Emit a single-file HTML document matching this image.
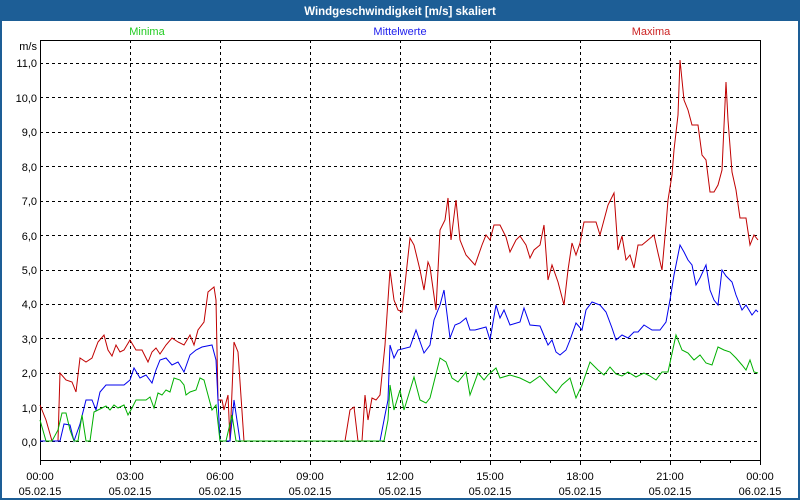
<!DOCTYPE html>
<html><head><meta charset="utf-8"><style>
body{margin:0;width:800px;height:500px;overflow:hidden;background:#fff;font-family:"Liberation Sans",sans-serif}
</style></head><body>
<svg width="800" height="500" xmlns="http://www.w3.org/2000/svg" style="display:block">
<rect x="0" y="0" width="800" height="500" fill="#1d5e96"/>
<rect x="2" y="21" width="796" height="477" fill="#fff"/>
<text x="400" y="15" fill="#fff" font-size="11.5" font-weight="bold" text-anchor="middle" font-family="Liberation Sans">Windgeschwindigkeit [m/s] skaliert</text>
<g font-size="11" font-family="Liberation Sans">
<text x="147" y="35" fill="#22cc22" text-anchor="middle">Minima</text>
<text x="400" y="35" fill="#2020ee" text-anchor="middle">Mittelwerte</text>
<text x="651" y="35" fill="#cc2222" text-anchor="middle">Maxima</text>
</g>
<g stroke="#000" stroke-width="1" stroke-dasharray="3,3" fill="none">
<path d="M40 63.5H760M40 97.5H760M40 132.5H760M40 166.5H760M40 201.5H760M40 235.5H760M40 270.5H760M40 304.5H760M40 338.5H760M40 373.5H760M40 407.5H760M40 441.5H760"/>
<path d="M130.5 40V460M220.5 40V460M310.5 40V460M400.5 40V460M490.5 40V460M580.5 40V460M670.5 40V460"/>
</g>
<path d="M40.5 40.5H760.5V460.5H40.5Z" fill="none" stroke="#000"/>
<g stroke="#000"><path d="M40.5 460V465M70.5 460V463M100.5 460V463M130.5 460V465M160.5 460V463M190.5 460V463M220.5 460V465M250.5 460V463M280.5 460V463M310.5 460V465M340.5 460V463M370.5 460V463M400.5 460V465M430.5 460V463M460.5 460V463M490.5 460V465M520.5 460V463M550.5 460V463M580.5 460V465M610.5 460V463M640.5 460V463M670.5 460V465M700.5 460V463M730.5 460V463M760.5 460V465"/></g>
<g font-size="11" font-family="Liberation Sans" fill="#000" text-anchor="end">
<text x="37" y="50">m/s</text>
<text x="37" y="67">11,0</text><text x="37" y="102">10,0</text><text x="37" y="136">9,0</text><text x="37" y="171">8,0</text><text x="37" y="205">7,0</text><text x="37" y="240">6,0</text><text x="37" y="274">5,0</text><text x="37" y="308">4,0</text><text x="37" y="343">3,0</text><text x="37" y="377">2,0</text><text x="37" y="412">1,0</text><text x="37" y="446">0,0</text>
</g>
<g font-size="11" font-family="Liberation Sans" fill="#000" text-anchor="middle">
<text x="40" y="480">00:00</text><text x="40" y="495">05.02.15</text>
<text x="130" y="480">03:00</text><text x="130" y="495">05.02.15</text>
<text x="220" y="480">06:00</text><text x="220" y="495">05.02.15</text>
<text x="310" y="480">09:00</text><text x="310" y="495">05.02.15</text>
<text x="400" y="480">12:00</text><text x="400" y="495">05.02.15</text>
<text x="490" y="480">15:00</text><text x="490" y="495">05.02.15</text>
<text x="580" y="480">18:00</text><text x="580" y="495">05.02.15</text>
<text x="670" y="480">21:00</text><text x="670" y="495">05.02.15</text>
<text x="760" y="480">00:00</text><text x="760" y="495">06.02.15</text>
</g>
<g fill="none" stroke-width="1">
<polyline stroke="#c00000" points="40,405 46,420 52,441 58,441 60,373 66,380 72,382 76,392 80,358 86,362 92,358 98,342 104,335 108,350 112,356 116,345 120,352 124,350 130,340 136,350 142,350 148,362 152,352 156,348 160,354 166,345 172,338 178,342 184,345 190,335 194,345 198,330 204,322 208,292 214,287 216,300 218,400 222,400 224,410 228,395 230,441 234,342 238,352 244,441 250,441 345,441 350,410 354,407 358,441 362,441 365,395 368,420 372,398 376,400 380,395 385,345 390,270 394,300 398,310 402,312 410,238 414,245 420,270 424,290 428,262 430,267 436,310 440,230 445,220 448,198 451,240 456,200 460,240 466,255 475,265 482,245 486,235 490,240 494,225 500,225 506,237 510,252 516,240 520,236 526,245 530,258 534,250 540,245 544,225 548,280 552,265 558,282 564,305 568,270 572,243 576,255 580,243 584,222 590,222 596,222 600,235 608,205 614,193 618,250 622,236 626,260 630,255 634,268 638,245 642,245 648,240 654,235 658,253 662,270 666,225 668,200 672,175 674,150 678,115 680,60 684,100 688,110 692,125 698,125 702,155 706,160 710,192 714,192 718,185 722,170 726,82 728,120 732,172 736,190 740,218 746,218 750,245 754,235 758,240"/>
<polyline stroke="#0000ee" points="40,441 60,441 64,424 70,425 74,441 80,424 86,400 92,400 96,410 100,392 106,385 124,385 130,380 134,368 140,378 146,375 152,383 156,370 160,360 166,358 172,365 178,362 184,372 190,355 196,350 202,347 212,345 216,360 220,441 230,441 234,400 240,441 380,441 385,415 388,400 390,345 394,358 398,350 410,347 416,330 424,353 430,345 434,320 440,305 444,290 450,338 455,325 460,323 466,318 470,330 475,330 486,327 490,340 496,305 500,318 504,310 510,325 520,322 524,308 530,325 540,326 548,345 552,340 556,352 560,355 566,350 570,340 576,323 582,330 586,310 592,302 600,305 606,312 612,328 616,340 622,335 628,338 634,332 638,332 644,325 652,330 660,330 666,322 670,300 674,275 680,245 684,252 688,260 692,265 696,285 700,278 706,265 710,290 714,300 718,305 722,270 726,276 732,282 736,295 742,310 746,305 752,315 756,310 758,312"/>
<polyline stroke="#00b000" points="40,420 46,441 52,441 58,430 62,413 66,413 70,430 74,441 78,441 82,415 86,441 90,441 94,412 98,410 106,406 110,410 114,405 118,408 124,405 128,415 132,408 136,400 146,400 150,397 154,408 158,393 162,395 166,390 170,392 174,378 180,380 184,385 186,395 190,392 196,390 200,378 204,380 208,395 212,410 216,405 220,441 226,441 232,415 236,441 384,441 388,420 390,385 394,410 400,390 404,410 414,377 420,400 426,403 430,398 440,358 446,362 452,378 458,382 466,372 470,395 478,373 484,380 488,375 496,368 500,378 510,375 520,378 530,383 540,376 550,387 556,393 562,385 570,378 576,398 582,385 590,362 598,370 604,375 610,367 616,374 622,376 628,372 636,377 644,373 650,376 656,380 662,372 668,372 676,335 682,350 688,353 694,360 700,355 706,363 712,365 718,347 724,350 730,352 736,358 742,365 746,370 750,360 754,372 758,373"/>
</g>
</svg>
</body></html>
